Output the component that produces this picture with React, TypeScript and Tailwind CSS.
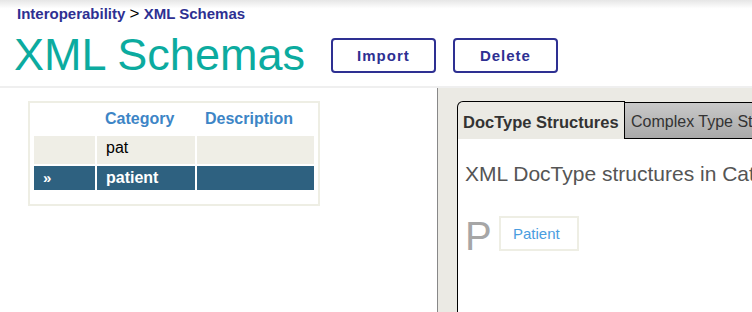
export default function App() {
  return (
    <div className="w-[752px] h-[312px] overflow-hidden bg-white font-['Liberation_Sans',Arial,sans-serif]">
      {/* Header */}
      <div className="h-[86px] bg-gradient-to-b from-[#e6e6e6] via-white via-[10%] to-white">
        <div className="pl-[17px] pt-[5px] h-[24px] text-[15px] leading-[18px] font-bold text-[#2e3092] whitespace-nowrap">
          Interoperability <span className="text-black font-normal text-[17px]">&gt;</span> XML Schemas
        </div>
        <div className="flex items-start pl-[14px] mt-[7px]">
          <h1 className="text-[45px] leading-[48px] text-[#0cab9f] whitespace-nowrap">XML Schemas</h1>
          <div className="flex gap-[17px] ml-[26px] mt-[7px]">
            <button className="w-[105px] h-[35px] border-2 border-[#2e3092] rounded-[4px] text-[15px] font-bold tracking-[1px] text-[#2e3092] pt-[2px]">
              Import
            </button>
            <button className="w-[105px] h-[35px] border-2 border-[#2e3092] rounded-[4px] text-[15px] font-bold tracking-[1px] text-[#2e3092] pt-[2px]">
              Delete
            </button>
          </div>
        </div>
      </div>
      <div className="h-[2px] bg-[#efefef]" />

      {/* Body */}
      <div className="flex h-[224px]">
        <div className="w-[437px] shrink-0 pt-[13px] pl-[28px]">
          <div className="w-[292px] border-2 border-[#eeeee4] px-[2px] pb-[12px]">
            <table className="w-full border-separate border-spacing-[2px] text-[16px]">
              <thead>
                <tr className="h-[29px]">
                  <th className="w-[61px]" />
                  <th className="w-[98px] text-left pl-[8px] pb-[2px] font-bold text-[#3d85c6]">Category</th>
                  <th className="text-left pl-[8px] pb-[2px] font-bold text-[#3d85c6]">Description</th>
                </tr>
              </thead>
              <tbody>
                <tr className="h-[27px] bg-[#efeee6]">
                  <td />
                  <td className="pl-[9px] pb-[4px] text-black">pat</td>
                  <td />
                </tr>
                <tr className="h-[23px] bg-[#2e6180] text-white font-bold">
                  <td className="pl-[9px] text-[15px]">»</td>
                  <td className="pl-[9px]">patient</td>
                  <td />
                </tr>
              </tbody>
            </table>
          </div>
        </div>

        <div className="flex-1 bg-[#ebeae4] border-l border-[#888888] pt-[13px] pl-[19px]">
          <div className="flex h-[38px]">
            <div className="w-[168px] shrink-0 border border-b-0 border-black rounded-tl-[6px] bg-[#ebeae4] text-[16.5px] font-bold text-[#333] pl-[5px] pt-[8px] whitespace-nowrap">
              DocType Structures
            </div>
            <div className="flex-1 mt-[1px] border border-black border-l-0 border-r-0 bg-gradient-to-b from-[#c9c9c9] to-[#a9a9a9] text-[16px] text-[#333] pl-[6px] pt-[7px] whitespace-nowrap overflow-hidden">
              Complex Type Structures
            </div>
          </div>
          <div className="h-full bg-white border-l border-black pl-[7px] pt-[23px]">
            <div className="text-[21px] leading-[24px] text-[#555] whitespace-nowrap">
              XML DocType structures in Category patient
            </div>
            <div className="flex items-start mt-[30px]">
              <span className="text-[40px] leading-[40px] text-[#a6a6a6] w-[34px]">P</span>
              <div className="border-2 border-[#eeeee4] w-[80px] h-[35px] text-[15px] text-[#4a9de0] pl-[12px] pt-[5px]">
                Patient
              </div>
            </div>
          </div>
        </div>
      </div>
    </div>
  );
}
